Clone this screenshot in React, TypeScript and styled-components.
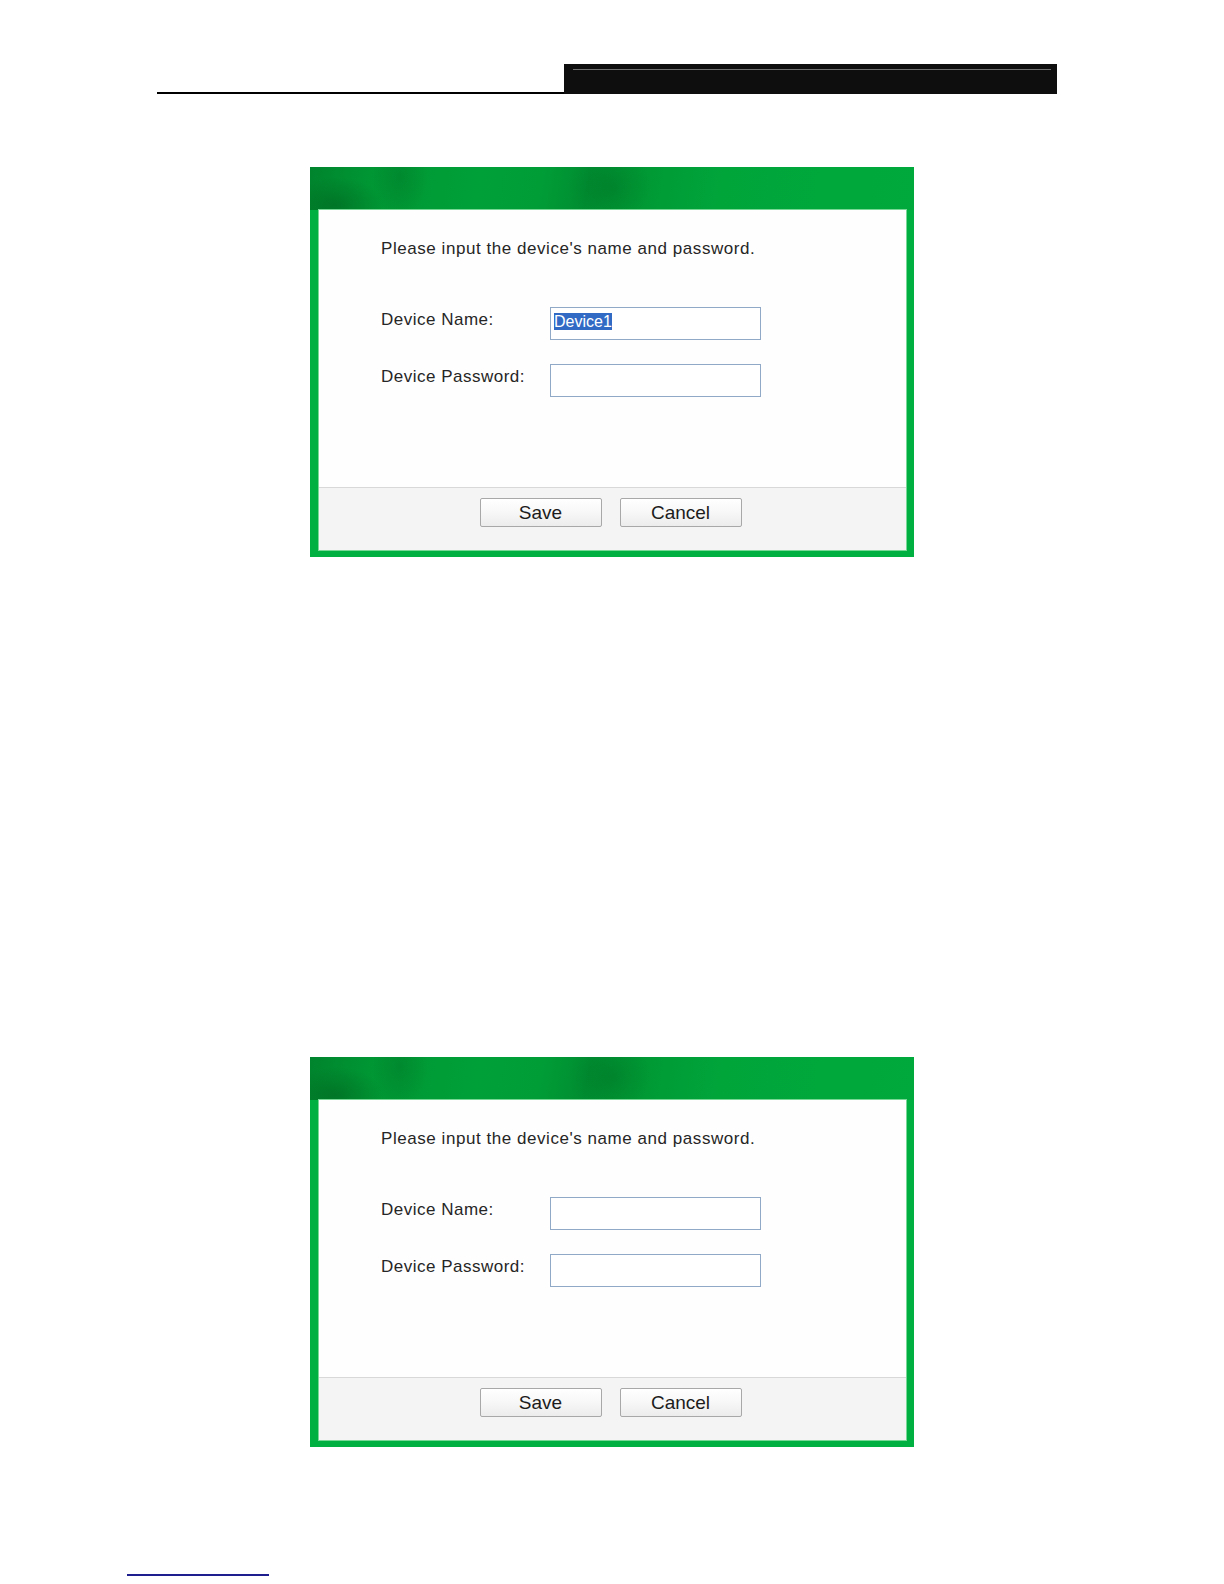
import React from "react";
import styled, { createGlobalStyle } from "styled-components";

const GlobalStyle = createGlobalStyle`
  html, body {
    margin: 0;
    padding: 0;
    background: #ffffff;
  }
  body {
    font-family: "Liberation Sans", Arial, sans-serif;
    min-height: 1584px;
  }
`;

const Page = styled.div`
  width: 1224px;
  min-height: 1584px;
  padding-top: 64px;
  box-sizing: border-box;
  display: flex;
  flex-direction: column;
`;

const HeaderRow = styled.div`
  display: flex;
  align-items: flex-end;
  margin-left: 157px;
  width: 900px;
`;

const HeaderRule = styled.div`
  flex: 1;
  height: 2px;
  background: #000000;
`;

const HeaderBar = styled.div`
  width: 493px;
  height: 30px;
  background: #0e0e0e;
  box-sizing: border-box;
  padding: 5px 6px 0 9px;
`;

const HeaderBarLine = styled.div`
  height: 1px;
  background: #707070;
`;

const Frame = styled.div<{ $top: number }>`
  margin-top: ${(p) => p.$top}px;
  margin-left: 310px;
  width: 604px;
  background: #00b040;
  display: flex;
  flex-direction: column;
`;

const TitleBand = styled.div`
  height: 43px;
  background:
    radial-gradient(ellipse 70px 40px at 25px 38px, rgba(0, 95, 28, 0.5), transparent 70%),
    radial-gradient(ellipse 40px 60px at 90px 10px, rgba(0, 90, 28, 0.25), transparent 70%),
    radial-gradient(ellipse 60px 50px at 300px 20px, rgba(0, 100, 30, 0.3), transparent 70%),
    linear-gradient(100deg, #00842d 0%, #009634 10%, #00a038 28%, #009d37 38%, #008d31 46%, #009a35 56%, #00a53a 68%, #00a93c 100%);
`;

const Inner = styled.div`
  margin: 0 8px 7px 9px;
  display: flex;
  flex-direction: column;
  box-shadow: 0 0 0 1px #7ad897;
`;

const Body = styled.div`
  height: 277px;
  box-sizing: border-box;
  background: #fefefe;
  padding: 29px 0 0 62px;
  color: #262626;
`;

const Intro = styled.div`
  font-size: 17px;
  line-height: 20px;
  letter-spacing: 0.55px;
`;

const Form = styled.div`
  margin-top: 48px;
  display: grid;
  grid-template-columns: 169px 211px;
  grid-auto-rows: 33px;
  row-gap: 24px;
`;

const Label = styled.div`
  font-size: 17px;
  line-height: 20px;
  padding-top: 3px;
  letter-spacing: 0.5px;
`;

const Field = styled.div`
  box-sizing: border-box;
  height: 33px;
  border: 1px solid #8fa9c6;
  background: #ffffff;
  padding: 5px 3px 0;
  font-size: 16px;
  line-height: 17px;
`;

const Selected = styled.span`
  background: #316ac5;
  color: #ffffff;
`;

const Footer = styled.div`
  height: 63px;
  box-sizing: border-box;
  border-top: 1px solid #d8d8d8;
  background: #f4f4f4;
  display: flex;
  justify-content: center;
  align-items: flex-start;
  gap: 18px;
  padding: 10px 4px 0 0;
`;

const Button = styled.button`
  width: 122px;
  height: 29px;
  box-sizing: border-box;
  border: 1px solid #a8a8a8;
  border-radius: 2px;
  background: linear-gradient(#ffffff, #f7f7f7 50%, #ececec);
  font-family: "Liberation Sans", Arial, sans-serif;
  font-size: 19px;
  color: #1c1c1c;
  padding: 0;
  line-height: 27px;
`;

const LinkLine = styled.div`
  margin-top: 127px;
  margin-left: 127px;
  width: 142px;
  height: 2px;
  background: #1e1e8e;
`;

type DialogProps = { top: number; name?: string };

const Dialog: React.FC<DialogProps> = ({ top, name }) => (
  <Frame $top={top}>
    <TitleBand />
    <Inner>
      <Body>
        <Intro>Please input the device's name and password.</Intro>
        <Form>
          <Label>Device Name:</Label>
          <Field>{name ? <Selected>{name}</Selected> : null}</Field>
          <Label>Device Password:</Label>
          <Field />
        </Form>
      </Body>
      <Footer>
        <Button>Save</Button>
        <Button>Cancel</Button>
      </Footer>
    </Inner>
  </Frame>
);

export default function App() {
  return (
    <>
      <GlobalStyle />
      <Page>
        <HeaderRow>
          <HeaderRule />
          <HeaderBar>
            <HeaderBarLine />
          </HeaderBar>
        </HeaderRow>
        <Dialog top={73} name="Device1" />
        <Dialog top={500} />
        <LinkLine />
      </Page>
    </>
  );
}
